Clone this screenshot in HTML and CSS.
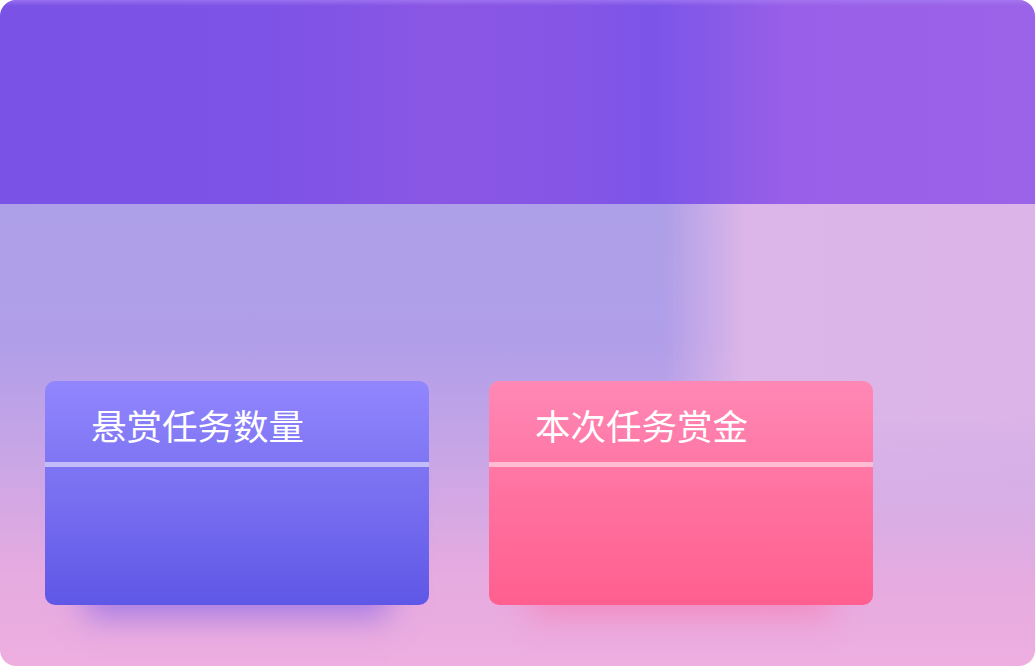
FILE: index.html
```html
<!DOCTYPE html>
<html lang="zh">
<head>
<meta charset="utf-8">
<link rel="stylesheet" href="styles.css">
</head>
<body>
<div class="panel">
  <div class="header"></div>
  <div class="content">
    <div class="card card-blue">
      <div class="card-head">悬赏任务数量</div>
      <div class="card-line"></div>
      <div class="card-body"></div>
    </div>
    <div class="card card-pink">
      <div class="card-head">本次任务赏金</div>
      <div class="card-line"></div>
      <div class="card-body"></div>
    </div>
  </div>
</div>
</body>
</html>
```
FILE: styles.css
```css
html, body {
  margin: 0;
  padding: 0;
  background: #ffffff;
}
.panel {
  width: 1035px;
  height: 666px;
  border-radius: 16px;
  overflow: hidden;
  display: flex;
  flex-direction: column;
  font-family: "Noto Sans CJK SC", "Noto Sans", sans-serif;
}
.header {
  height: 204px;
  flex: none;
  background:
    linear-gradient(to bottom, rgba(170,130,245,0.6) 0px, rgba(170,130,245,0) 6px),
    linear-gradient(to right, #7a52e5 0%, #7c53e6 25%, #8a56e4 42%, #8655e5 55%, #7b55e8 63%, #8a5be8 70%, #995fe8 76%, #9b63e8 100%);
}
.content {
  flex: 1;
  position: relative;
  display: flex;
  gap: 60px;
  padding: 177px 0 0 45px;
  background: linear-gradient(to bottom, #ad9fe8 0%, #b09ee9 30%, #c9a6e6 55%, #e6abe0 80%, #eeaee0 100%);
}
.content::before {
  content: "";
  position: absolute;
  inset: 0;
  background: linear-gradient(to right, rgba(220,182,232,0) 0%, rgba(220,182,232,0) 64%, rgba(220,182,232,1) 72%, rgba(220,180,232,1) 100%);
  -webkit-mask-image: linear-gradient(to bottom, #000 0%, #000 45%, rgba(0,0,0,0) 85%);
  mask-image: linear-gradient(to bottom, #000 0%, #000 45%, rgba(0,0,0,0) 85%);
}
.card {
  width: 384px;
  height: 224px;
  border-radius: 10px;
  display: flex;
  flex-direction: column;
  overflow: hidden;
  position: relative;
  z-index: 1;
}
.card-blue {
  background: linear-gradient(to bottom, #9186fd 0%, #7b72f2 45%, #5f57e6 100%);
  box-shadow: 0 52px 30px -40px rgba(120,90,230,0.6);
}
.card-pink {
  background: linear-gradient(to bottom, #ff88b5 0%, #ff74a2 45%, #ff5f8f 100%);
  box-shadow: 0 52px 30px -40px rgba(255,100,160,0.45);
}
.card-head {
  height: 81px;
  flex: none;
  box-sizing: border-box;
  padding: 20px 0 0 46px;
  color: #ffffff;
  font-size: 35.5px;
  line-height: 48px;
}
.card-line {
  height: 5px;
  flex: none;
}
.card-blue .card-line { background: #c2bcf8; }
.card-pink .card-line { background: #ffbcd4; }
.card-body {
  flex: 1;
}
```
